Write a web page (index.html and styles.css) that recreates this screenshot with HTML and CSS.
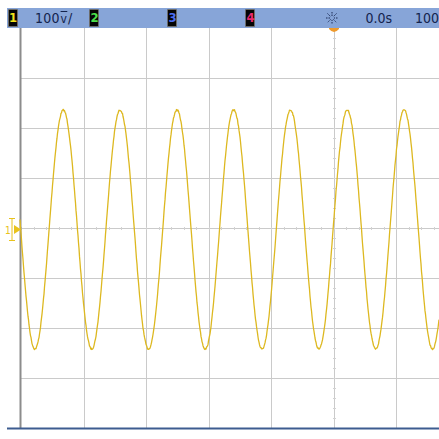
FILE: index.html
```html
<!DOCTYPE html>
<html lang="en">
<head>
    <meta charset="UTF-8">
    <meta name="viewport" content="width=device-width, initial-scale=1.0">
    <title>Scope Capture</title>
    <link rel="stylesheet" href="styles.css">
</head>
<body>
    <div class="scope">
        <!-- Status line -->
        <header class="status-bar">
            <span class="chan ch1">1</span>
            <span class="scale">100<span class="unit">v</span>/</span>
            <span class="chan ch2">2</span>
            <span class="chan ch3">3</span>
            <span class="chan ch4">4</span>
            <svg class="acq-icon" width="12" height="12" viewBox="0 0 12 12">
                <g stroke="#1a2a55" stroke-width="1" stroke-dasharray="1.5 1">
                    <line x1="6" y1="0" x2="6" y2="12"/>
                    <line x1="0" y1="6" x2="12" y2="6"/>
                    <line x1="1.5" y1="1.5" x2="10.5" y2="10.5"/>
                    <line x1="10.5" y1="1.5" x2="1.5" y2="10.5"/>
                </g>
                <circle cx="6" cy="6" r="2" fill="#87a5d8"/>
            </svg>
            <span class="time">0.0s</span>
            <span class="time-div">100</span>
        </header>

        <!-- Graticule + trace -->
        <svg class="screen" id="screen" width="439" height="411" viewBox="0 0 439 411">
            <g id="grid" stroke="#cacaca" stroke-width="1"></g>
            <g id="ticks" stroke="#d2d2d2" stroke-width="1"></g>
            <line x1="20.5" y1="0" x2="20.5" y2="401" stroke="#8c8c8c" stroke-width="2"/>
            <polyline id="trace" fill="none" stroke="#ddb820" stroke-width="1.3" stroke-linejoin="round"/>
            <!-- channel 1 ground marker -->
            <g class="gnd" fill="#e8c21c" stroke="#e8c21c">
                <path d="M14 197 L21 201.5 L14 206 Z" stroke="none"/>
                <line x1="9" y1="190.5" x2="15" y2="190.5" stroke-width="1"/>
                <line x1="12" y1="190" x2="12" y2="213" stroke-width="1"/>
                <line x1="9" y1="212.5" x2="15" y2="212.5" stroke-width="1"/>
                <text x="5" y="206" font-size="10" stroke="none" font-family="DejaVu Sans Condensed, sans-serif">1</text>
            </g>
            <!-- trigger position -->
            <path d="M329 0 L339 0 L339 1 Q334 7 329 1 Z" fill="#ef9a2c"/>
            <line x1="7" y1="400.5" x2="439" y2="400.5" stroke="#3d5c90" stroke-width="2"/>
        </svg>
    </div>

    <script src="scope.js"></script>
</body>
</html>
```

FILE: styles.css
```css
* {
    margin: 0;
    padding: 0;
    box-sizing: border-box;
}

body {
    background-color: #fff;
    width: 439px;
    height: 439px;
    overflow: hidden;
    font-family: 'DejaVu Sans Condensed', 'Liberation Sans', sans-serif;
}

.scope {
    padding-top: 8px;
}

.status-bar {
    margin-left: 7px;
    height: 20px;
    background-color: #87a5d8;
    display: flex;
    align-items: center;
    color: #13234d;
    font-size: 14px;
    white-space: nowrap;
}

.chan {
    width: 10px;
    height: 18px;
    background-color: #050505;
    border: 1px solid #6b6b6b;
    border-radius: 1px;
    font-size: 13px;
    font-weight: bold;
    line-height: 16px;
    text-align: center;
    flex-shrink: 0;
}

.ch1 {
    color: #f2e21a;
    margin-left: 1px;
}

.ch2 {
    color: #4ce04c;
    margin-left: 17px;
}

.ch3 {
    color: #4a6cf0;
    margin-left: 68px;
}

.ch4 {
    color: #e8286e;
    margin-left: 68px;
}

.scale {
    margin-left: 17px;
    letter-spacing: 0.3px;
}

/* the volts unit is squeezed into one cell with a bar over it */
.unit {
    display: inline-block;
    width: 8px;
    text-align: center;
    font-size: 12px;
    text-decoration: overline;
}

.acq-icon {
    margin-left: 71px;
    flex-shrink: 0;
}

.time {
    margin-left: 27px;
}

.time-div {
    margin-left: 23px;
}

.screen {
    display: block;
}
```

FILE: scope.js
```js
const NS = 'http://www.w3.org/2000/svg';

function line(parent, x1, y1, x2, y2) {
    const el = document.createElementNS(NS, 'line');
    el.setAttribute('x1', x1);
    el.setAttribute('y1', y1);
    el.setAttribute('x2', x2);
    el.setAttribute('y2', y2);
    parent.appendChild(el);
}

// graticule: 62.5px per horizontal division, 50px per vertical division
const grid = document.getElementById('grid');
[84, 146, 209, 271, 334, 396].forEach(x => line(grid, x + 0.5, 0, x + 0.5, 401));
for (let y = 50; y < 400; y += 50) {
    line(grid, 21, y + 0.5, 439, y + 0.5);
}

// minor ticks on the centre axes
const ticks = document.getElementById('ticks');
for (let x = 21; x < 439; x += 12.5) {
    const px = Math.round(x) + 0.5;
    line(ticks, px, 199, px, 202);
}
for (let y = 10; y < 400; y += 10) {
    line(ticks, 333, y + 0.5, 336, y + 0.5);
}

// channel 1 trace, a sine with a little noise on it
const mid = 201.5, amp = 119.5, period = 56.8, peak = 63.3;
let seed = 7;
function rand() {
    seed = (seed * 16807) % 2147483647;
    return seed / 2147483647 - 0.5;
}
const pts = [];
for (let x = 20; x <= 439; x += 0.5) {
    const y = mid - amp * Math.cos(2 * Math.PI * (x - peak) / period) + rand() * 1.6;
    pts.push(x.toFixed(1) + ',' + y.toFixed(1));
}
document.getElementById('trace').setAttribute('points', pts.join(' '));
```
